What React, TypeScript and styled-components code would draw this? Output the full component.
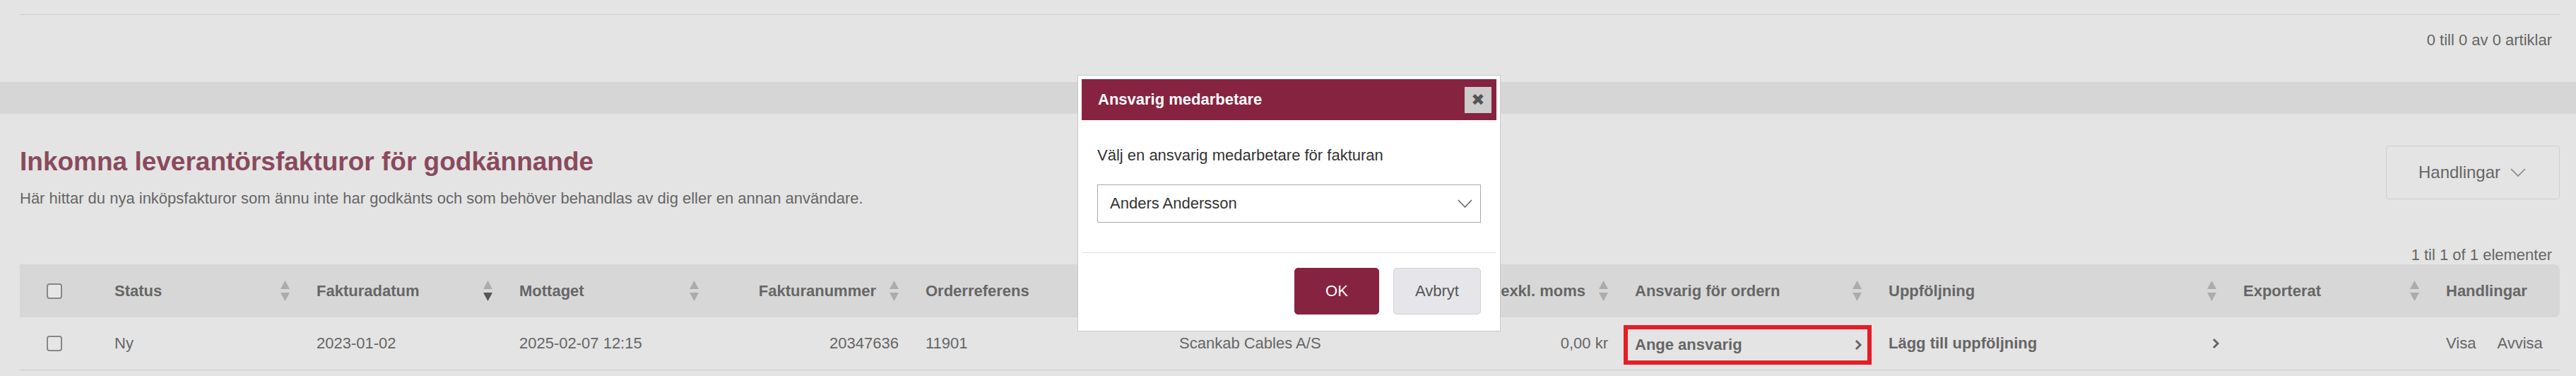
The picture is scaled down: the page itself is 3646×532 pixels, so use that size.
import styled, {createGlobalStyle} from "styled-components";

const GlobalStyle = createGlobalStyle`
    html, body {
        margin: 0;
        padding: 0;
        background: #e4e4e4;
        font-family: "Liberation Sans", Arial, sans-serif;
        color: #666;
    }
    * {
        box-sizing: border-box;
    }
`;

type Col = {
    title: string;
    width: number;
    numeric?: boolean;
    sort?: "none" | "desc";
};

const columns: Col[] = [
    {title: "Status", width: 286, sort: "none"},
    {title: "Fakturadatum", width: 287, sort: "desc"},
    {title: "Mottaget", width: 292, sort: "none"},
    {title: "Fakturanummer", width: 283, numeric: true, sort: "none"},
    {title: "Orderreferens", width: 359, sort: "none"},
    {title: "Leverantör", width: 351, sort: "none"},
    {title: "Belopp exkl. moms", width: 294, numeric: true, sort: "none"},
    {title: "Ansvarig för ordern", width: 359, sort: "none"},
    {title: "Uppföljning", width: 502, sort: "none"},
    {title: "Exporterat", width: 287, sort: "none"},
    {title: "Handlingar", width: 181},
];

const SortIcon = ({active}: { active?: boolean }) => (
    <SortSvg width="13" height="29" viewBox="0 0 13 29">
        <polygon points="6.5,0 13,12 0,12" fill="#acacac"/>
        <polygon points="0,17 13,17 6.5,29" fill={active ? "#555" : "#acacac"}/>
    </SortSvg>
);

const Chevron = () => (
    <svg width="12" height="16" viewBox="0 0 12 16">
        <polyline points="3,2 9,8 3,14" fill="none" stroke="#666" strokeWidth="3"/>
    </svg>
);

export default function App() {
    return (
        <Page>
            <GlobalStyle/>
            <TopArea>
                <Pager>0 till 0 av 0 artiklar</Pager>
            </TopArea>
            <Band/>
            <Section>
                <HeadRow>
                    <div>
                        <Title>Inkomna leverantörsfakturor för godkännande</Title>
                        <Lead>Här hittar du nya inköpsfakturor som ännu inte har godkänts och som behöver behandlas av dig eller en annan användare.</Lead>
                    </div>
                    <ActionsButton>
                        Handlingar
                        <svg width="22" height="12" viewBox="0 0 22 12">
                            <polyline points="1,1 11,11 21,1" fill="none" stroke="#888" strokeWidth="1.6"/>
                        </svg>
                    </ActionsButton>
                </HeadRow>
                <Count>1 til 1 of 1 elementer</Count>
                <Table>
                    <colgroup>
                        <col style={{width: 114}}/>
                        {columns.map(c => <col key={c.title} style={{width: c.width}}/>)}
                    </colgroup>
                    <thead>
                    <tr>
                        <Th><Check/></Th>
                        {columns.map(c => (
                            <Th key={c.title} numeric={c.numeric} $last={c.title === "Handlingar"}>
                                {c.title}
                                {c.sort && <SortIcon active={c.sort === "desc"}/>}
                            </Th>
                        ))}
                    </tr>
                    </thead>
                    <tbody>
                    <tr>
                        <Td><Check/></Td>
                        <Td>Ny</Td>
                        <Td>2023-01-02</Td>
                        <Td>2025-02-07 12:15</Td>
                        <Td numeric>20347636</Td>
                        <Td>11901</Td>
                        <Td>Scankab Cables A/S</Td>
                        <Td numeric>0,00 kr</Td>
                        <LinkTd>
                            <Marked>
                                <LinkText>Ange ansvarig</LinkText>
                                <Chevron/>
                            </Marked>
                        </LinkTd>
                        <Td>
                            <LinkRow>
                                <LinkText>Lägg till uppföljning</LinkText>
                                <Chevron/>
                            </LinkRow>
                        </Td>
                        <Td/>
                        <Td>
                            <RowActions>
                                <span>Visa</span>
                                <span>Avvisa</span>
                            </RowActions>
                        </Td>
                    </tr>
                    </tbody>
                </Table>
            </Section>

            <Modal>
                <ModalHeader>
                    <ModalTitle>Ansvarig medarbetare</ModalTitle>
                    <CloseButton>✖</CloseButton>
                </ModalHeader>
                <ModalBody>
                    <ModalText>Välj en ansvarig medarbetare för fakturan</ModalText>
                    <Select>
                        Anders Andersson
                        <svg width="21" height="12" viewBox="0 0 21 12">
                            <polyline points="1,1 10.5,11 20,1" fill="none" stroke="#666" strokeWidth="1.6"/>
                        </svg>
                    </Select>
                </ModalBody>
                <Divider/>
                <ModalFooter>
                    <Button primary>OK</Button>
                    <Button>Avbryt</Button>
                </ModalFooter>
            </Modal>
        </Page>
    );
}

const Page = styled.div`
    position: relative;
    width: 3646px;
    height: 532px;
    overflow: hidden;
`;

const TopArea = styled.div`
    padding: 20px 23px 0 28px;
`;

const Pager = styled.div`
    border-top: 1px solid #cdcdcd;
    padding: 23px 11px 0 0;
    text-align: right;
    font-size: 22px;
    line-height: 26px;
    color: #666;
`;

const Band = styled.div`
    margin-top: 46px;
    height: 45px;
    background: #d6d6d6;
`;

const Section = styled.section`
    padding: 46px 23px 0 28px;
`;

const HeadRow = styled.div`
    display: flex;
    justify-content: space-between;
    align-items: flex-start;
`;

const Title = styled.h1`
    margin: 0;
    font-size: 37px;
    line-height: 44px;
    font-weight: 700;
    color: #8a4a5d;
`;

const Lead = styled.p`
    margin: 17px 0 0;
    font-size: 22px;
    line-height: 26px;
    color: #666;
`;

const ActionsButton = styled.div`
    margin-top: -1px;
    width: 246px;
    height: 76px;
    display: flex;
    align-items: center;
    justify-content: center;
    gap: 14px;
    border: 1px solid #d0d0d0;
    border-radius: 4px;
    font-size: 24px;
    color: #666;
    padding-right: 2px;
`;

const Count = styled.div`
    margin-top: 54px;
    padding-right: 11px;
    text-align: right;
    font-size: 22px;
    line-height: 26px;
    color: #666;
`;

const Table = styled.table`
    width: 3595px;
    table-layout: fixed;
    border-collapse: collapse;
    font-size: 22px;
`;

const Th = styled.th<{ numeric?: boolean; $last?: boolean }>`
    position: relative;
    height: 75px;
    padding: 0 ${p => (p.numeric ? "50px" : "20px")} 0 20px;
    text-align: ${p => (p.numeric ? "right" : "left")};
    background: #d7d7d7;
    font-weight: 700;
    color: #666;
    white-space: nowrap;
    border-radius: ${p => (p.$last ? "0 8px 8px 0" : "0")};

    &:first-child {
        padding-left: 38px;
    }
`;

const SortSvg = styled.svg`
    position: absolute;
    right: 18px;
    top: 23px;
`;

const Td = styled.td<{ numeric?: boolean }>`
    height: 74px;
    padding: 0 ${p => (p.numeric ? "18px" : "20px")} 0 20px;
    text-align: ${p => (p.numeric ? "right" : "left")};
    border-bottom: 1px solid #cccccc;
    color: #666;
    white-space: nowrap;

    &:first-child {
        padding-left: 38px;
    }
`;

const Check = styled.span`
    display: block;
    width: 22px;
    height: 22px;
    border: 2px solid #888;
    border-radius: 4px;
    background: #e6e6e6;
`;

const LinkTd = styled(Td)`
    padding: 0 4px;
`;

const Marked = styled.div`
    display: flex;
    align-items: center;
    justify-content: space-between;
    height: 56px;
    margin: 4px 0 0;
    padding: 0 7px 0 10px;
    border: 6px solid #e41e26;
`;

const LinkRow = styled.div`
    display: flex;
    align-items: center;
    justify-content: space-between;
    margin-right: -7px;
`;

const LinkText = styled.span`
    font-weight: 700;
    color: #666;
`;

const RowActions = styled.div`
    display: flex;
    gap: 30px;
`;

const Modal = styled.div`
    position: absolute;
    left: 1525px;
    top: 106px;
    width: 599px;
    background: #fff;
    border: 1px solid #c8c8c8;
    padding: 5px;
`;

const ModalHeader = styled.div`
    height: 58px;
    background: #862341;
    display: flex;
    align-items: center;
    justify-content: space-between;
    padding: 0 7px 0 23px;
`;

const ModalTitle = styled.h2`
    margin: 0;
    font-size: 22px;
    font-weight: 700;
    color: #fff;
`;

const CloseButton = styled.span`
    width: 38px;
    height: 37px;
    background: #cccccc;
    color: #555;
    display: flex;
    align-items: center;
    justify-content: center;
    font-size: 23px;
    font-family: "DejaVu Sans", sans-serif;
`;

const ModalBody = styled.div`
    padding: 37px 22px 42px;
`;

const ModalText = styled.div`
    font-size: 22px;
    line-height: 26px;
    color: #333;
`;

const Select = styled.div`
    margin-top: 28px;
    height: 54px;
    border: 1px solid #aaa;
    display: flex;
    align-items: center;
    justify-content: space-between;
    padding: 0 11px 0 17px;
    font-size: 22px;
    color: #333;
`;

const Divider = styled.div`
    height: 1px;
    background: #e0e0e0;
`;

const ModalFooter = styled.div`
    display: flex;
    justify-content: flex-end;
    gap: 20px;
    padding: 21px 22px 18px;
`;

const Button = styled.button<{ primary?: boolean }>`
    height: 66px;
    width: ${p => (p.primary ? "120px" : "124px")};
    border-radius: 5px;
    border: 1px solid ${p => (p.primary ? "#862341" : "#d0d0d0")};
    background: ${p => (p.primary ? "#862341" : "#e6e6ea")};
    color: ${p => (p.primary ? "#fff" : "#555")};
    font-family: "Liberation Sans", Arial, sans-serif;
    font-size: 22px;
    padding: 0;
`;
